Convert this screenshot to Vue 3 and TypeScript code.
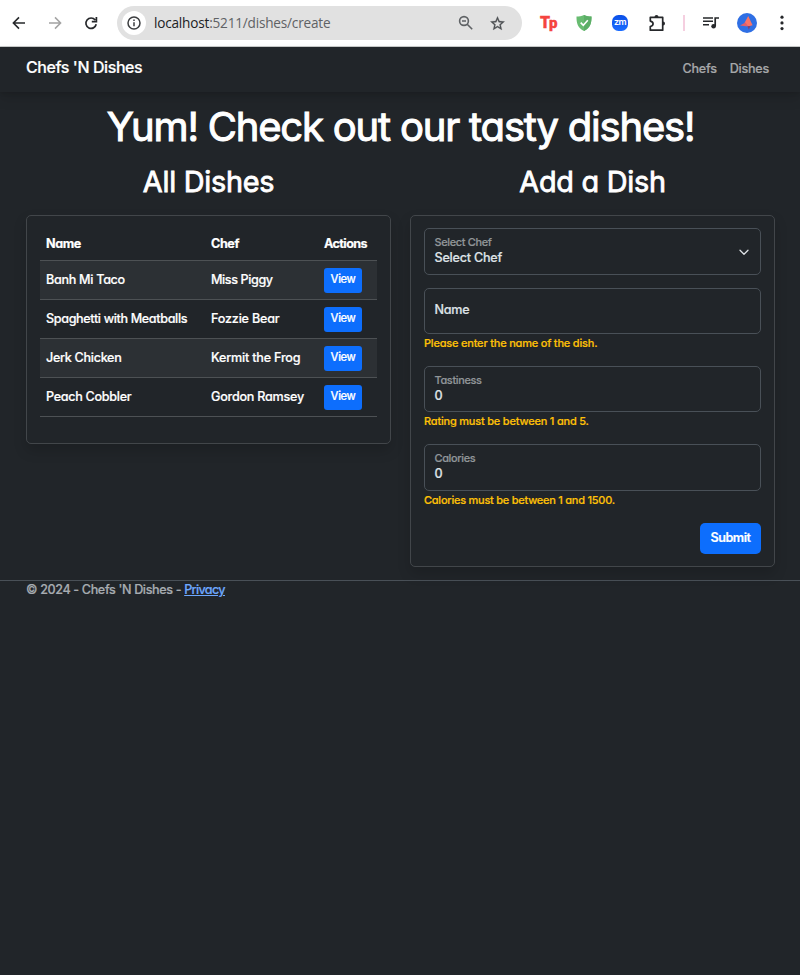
<script setup lang="ts">
interface Dish { name: string; chef: string; k: string }
interface Field { label: string; value: string; error: string; k: string }

const dishes: Dish[] = [
  { name: 'Banh Mi Taco', chef: 'Miss Piggy', k: 'r1' },
  { name: 'Spaghetti with Meatballs', chef: 'Fozzie Bear', k: 'r2' },
  { name: 'Jerk Chicken', chef: 'Kermit the Frog', k: 'r3' },
  { name: 'Peach Cobbler', chef: 'Gordon Ramsey', k: 'r4' },
]
const fields: Field[] = [
  { label: 'Name', value: '', error: 'Please enter the name of the dish.', k: 'f-name' },
  { label: 'Tastiness', value: '0', error: 'Rating must be between 1 and 5.', k: 'f-taste' },
  { label: 'Calories', value: '0', error: 'Calories must be between 1 and 1500.', k: 'f-cal' },
]
</script>

<template>
  <div class="window">
    <header class="chrome">
      <div class="nav-icons">
        <svg width="14" height="14" viewBox="0 0 14 14" fill="none" stroke="#26282b" stroke-width="1.6"><path d="M13 7H1.8M7 1.4 1.4 7 7 12.6" /></svg>
        <svg width="14" height="14" viewBox="0 0 14 14" fill="none" stroke="#a3a3a3" stroke-width="1.5"><path d="M1 7h11.2M7 1.4 12.6 7 7 12.6" /></svg>
        <svg width="14" height="14" viewBox="0 0 14 14" fill="none" stroke="#26282b" stroke-width="1.7"><path d="M12.2 8.3A5.2 5.2 0 1 1 11.2 4M12.4 1v4.6H7.8" /></svg>
      </div>
      <div class="omnibox">
        <span class="info">
          <svg width="14" height="14" viewBox="0 0 14 14"><circle cx="7" cy="7" r="6" fill="none" stroke="#3c3e40" stroke-width="1.5" /><path d="M7 6.2v4M7 3.6v1.5" stroke="#3c3e40" stroke-width="1.5" /></svg>
        </span>
        <span class="url"><b>localhost</b>:5211/dishes/create</span>
        <svg class="mag" width="16" height="16" viewBox="0 0 16 16" fill="none" stroke="#5f6265" stroke-width="1.6"><circle cx="6" cy="6" r="4.4" /><path d="m9.2 9.2 5 5M4 6h4" /></svg>
        <svg class="star" width="17" height="17" viewBox="0 0 24 24" fill="#4c4f52"><path d="m22 9.24-7.19-.62L12 2 9.19 8.63 2 9.24l5.46 4.73L5.82 21 12 17.27 18.18 21l-1.63-7.03zM12 15.4l-3.76 2.27 1-4.28-3.32-2.88 4.38-.38L12 6.1l1.71 4.04 4.38.38-3.32 2.88 1 4.28z" stroke="#4c4f52" stroke-width=".4" /></svg>
      </div>
      <div class="extensions">
        <span class="tp">T<i>p</i></span>
        <svg width="16" height="16" viewBox="0 0 16 16"><path d="M8 0c2.4 1.2 5 1.6 7.5 1.6C15.6 8 14.5 13 8 16 1.5 13 .4 8 .5 1.6 3 1.6 5.6 1.2 8 0z" fill="#68bc71" /><path d="M8 0c2.4 1.2 5 1.6 7.5 1.6C15.6 8 14.5 13 8 16z" fill="#5cae67" /><path d="m4.7 7.6 2.6 2.7 4.5-5" fill="none" stroke="#fff" stroke-width="1.6" /></svg>
        <span class="zm">zm</span>
        <svg width="18" height="18" viewBox="0 0 18 18" fill="none" stroke="#26282b" stroke-width="1.7" stroke-linejoin="round"><path d="M2.3 3.3H14.7V16.2H2.3V12.5C6 11.6 6 8 2.3 7.1z" /><path d="M6.5 3a2 2 0 0 1 4 0zM15 7.6a2 2 0 0 1 0 4z" fill="#26282b" stroke="none" /></svg>
        <i class="divider"></i>
        <svg width="16" height="14" viewBox="0 0 16 14"><path d="M0 2h10M0 5.3h10M0 8.7h6" stroke="#26282b" stroke-width="1.6" /><path d="M12.2 10V2H16" fill="none" stroke="#26282b" stroke-width="1.7" /><circle cx="10.6" cy="10.3" r="2.3" fill="#26282b" /></svg>
        <svg width="20" height="20" viewBox="0 0 20 20"><circle cx="10" cy="10" r="10" fill="#2f6fe4" /><path d="M11.2 3 7.6 9.8 11 13.5l4.6-1.2z" fill="#fa7467" /><path d="m8.5 9.5-5.5 3 8 1z" fill="#e5606a" /><path d="m10.5 13 1.2 3.7 1.8-3.7z" fill="#7a4478" /></svg>
        <svg width="4" height="16" viewBox="0 0 4 16" fill="#26282b"><circle cx="2" cy="2.2" r="1.6" /><circle cx="2" cy="7.9" r="1.6" /><circle cx="2" cy="13.6" r="1.6" /></svg>
      </div>
    </header>

    <nav class="navbar">
      <a class="brand">Chefs 'N Dishes</a>
      <div class="links"><a>Chefs</a><a>Dishes</a></div>
    </nav>

    <main>
      <h1>Yum! Check out our tasty dishes!</h1>
      <div class="columns">
        <section>
          <h2>All Dishes</h2>
          <div class="card">
            <table>
              <thead><tr><th class="c1">Name</th><th class="c2">Chef</th><th class="c3">Actions</th></tr></thead>
              <tbody>
                <tr v-for="d in dishes" :key="d.name" :class="d.k">
                  <td><span class="dish">{{ d.name }}</span></td>
                  <td><span class="chef">{{ d.chef }}</span></td>
                  <td><button class="view">View</button></td>
                </tr>
              </tbody>
            </table>
          </div>
        </section>
        <section>
          <h2>Add a Dish</h2>
          <form class="card" @submit.prevent>
            <div class="box select">
              <div class="stack"><span class="label">Select Chef</span><span class="value">Select Chef</span></div>
              <svg width="10" height="7" viewBox="0 0 10 7" fill="none" stroke="#dee2e6" stroke-width="1.3" stroke-linecap="round" stroke-linejoin="round"><path d="m1 1.3 4 4 4-4" /></svg>
            </div>
            <div v-for="f in fields" :key="f.label" class="group" :class="f.k">
              <div class="box">
                <div v-if="f.value" class="stack"><span class="label">{{ f.label }}</span><span class="value">{{ f.value }}</span></div>
                <span v-else class="value">{{ f.label }}</span>
              </div>
              <p class="error">{{ f.error }}</p>
            </div>
            <button class="submit">Submit</button>
          </form>
        </section>
      </div>
    </main>
    <footer><span>© 2024 - Chefs 'N Dishes - </span><a>Privacy</a></footer>
  </div>
</template>

<style>
body { margin: 0; background: #212529; }
</style>

<style scoped>
* { box-sizing: border-box; }
.window { height: 975px; overflow: hidden; background: #212529; color: #fff; font: 500 12.6px/19px Inter, sans-serif; font-feature-settings: "cv11"; letter-spacing: -.3px; white-space: nowrap; -webkit-text-stroke: .2px currentColor; }
svg { display: block; flex: none; }
.chrome { height: 47px; background: #fff; border-bottom: 1px solid #c9cbca; display: flex; align-items: center; padding-left: 12px; letter-spacing: 0; -webkit-text-stroke: 0; }
.nav-icons { display: flex; gap: 22px; width: 105px; flex: none; }
.omnibox { flex: none; width: 405px; height: 34px; border-radius: 17px; background: #e1e1e1; display: flex; align-items: center; padding: 0 16px 0 5px; }
.info { width: 24px; height: 24px; border-radius: 50%; background: #fff; display: grid; place-items: center; flex: none; }
.url { font: 400 13.6px/20px "Open Sans", sans-serif; letter-spacing: -.2px; color: #5f6265; margin-left: 8px; }
.url b { font-weight: 400; color: #202124; }
.mag { margin-left: auto; }
.star { margin-left: 15px; }
.extensions { display: grid; grid-template-columns: 36px 36px 36px 37px 17px 37px 35px 36px; place-items: center; margin-left: 8px; }
.tp { font: 900 16px/16px Roboto, sans-serif; color: #f5443f; letter-spacing: -1.2px; width: 16px; -webkit-text-stroke: .4px #f5443f; }
.tp i { font-style: normal; font-size: 15px; }
.zm { width: 16px; height: 16px; border-radius: 6.5px; background: linear-gradient(#0b50e8, #1a6cff); color: #fff; font: 600 9px/14px Inter, sans-serif; text-align: center; letter-spacing: -.5px; }
.divider { width: 2px; height: 16px; background: #f5cfe0; }
.navbar { height: 45px; display: flex; justify-content: space-between; align-items: center; padding: 0 31px 4px 26px; box-shadow: 0 1.6px 3.2px rgba(0,0,0,.08), 0 6px 13px rgba(0,0,0,.12); }
.brand { font-size: 16px; line-height: 24px; letter-spacing: -.42px; padding-bottom: 2px; }
.links { display: flex; gap: 13px; color: #a6a8a9; padding-top: 2px; letter-spacing: -.25px; }
main { padding: 9px 25px 13px 26px; }
h1, h2 { margin: 0; font-weight: 400; text-align: center; stroke-linejoin: round; }
h1 { font-size: 40px; line-height: 52px; -webkit-text-stroke: 1px #fff; letter-spacing: -1.2px; }
h2 { font-size: 28.8px; line-height: 38px; margin: 10px 0 14px; -webkit-text-stroke: .8px #fff; letter-spacing: -.25px; }
.columns { display: grid; grid-template-columns: 365px 365px; gap: 19px; align-items: start; }
.card { border: 1px solid #42464a; border-radius: 5px; padding: 12px 13px; box-shadow: 0 6.4px 12.8px rgba(0,0,0,.15); }
table { width: 337px; border-collapse: collapse; table-layout: fixed; margin-bottom: 14px; }
th, td { text-align: left; padding: 0 0 0 6px; border-bottom: 1px solid #4d5154; }
th { height: 32px; font-weight: 700; letter-spacing: -.4px; }
.c3 { letter-spacing: -.6px; }
td { height: 39px; }
.c1 { width: 165px; }
.c2 { width: 113px; }
.r1 .chef { letter-spacing: -.4px; }
.r2 .dish { letter-spacing: -.36px; }
.r2 .chef, .r3 .chef { letter-spacing: -.2px; }
.r4 .chef { letter-spacing: -.24px; }
tbody tr:nth-child(odd) { background: #2c3034; }
button { font: inherit; font-feature-settings: inherit; letter-spacing: -.4px; color: #fff; background: #0d6efd; border: 0; padding: 0; display: block; }
.view { width: 38px; height: 25px; border-radius: 3px; font-size: 11.2px; padding-bottom: 1px; margin-top: 1px; }
.box { height: 46px; border: 1px solid #495057; border-radius: 5px; display: flex; align-items: center; padding: 0 11px 3px 9.5px; color: #dee2e6; letter-spacing: -.22px; }
.select { height: 47px; margin-bottom: 13px; padding-bottom: 4px; justify-content: space-between; }
.select svg { margin-top: 5px; }
.stack { display: flex; flex-direction: column; line-height: 16px; }
.label { font-size: 10.9px; color: #919699; letter-spacing: -.32px; }
.value { line-height: 16px; }
.stack .value { height: 15px; }
.group { height: 78px; }
.f-cal .box { height: 47px; padding-bottom: 4px; }
.f-cal { height: 79px; }
.error { margin: 0; font-size: 11px; line-height: 18px; color: #ffc107; letter-spacing: -.2px; }
.f-cal .error { letter-spacing: -.25px; }
.submit { width: 61px; height: 31px; border-radius: 5px; margin-left: auto; padding-bottom: 2px; font-weight: 600; letter-spacing: -.5px; }
footer { border-top: 1px solid #495057; padding-left: 26px; display: flex; line-height: 17px; color: #a7acb1; white-space: pre; letter-spacing: -.37px; }
footer a { color: #6ea8fe; text-decoration: underline; letter-spacing: -.65px; }
</style>
